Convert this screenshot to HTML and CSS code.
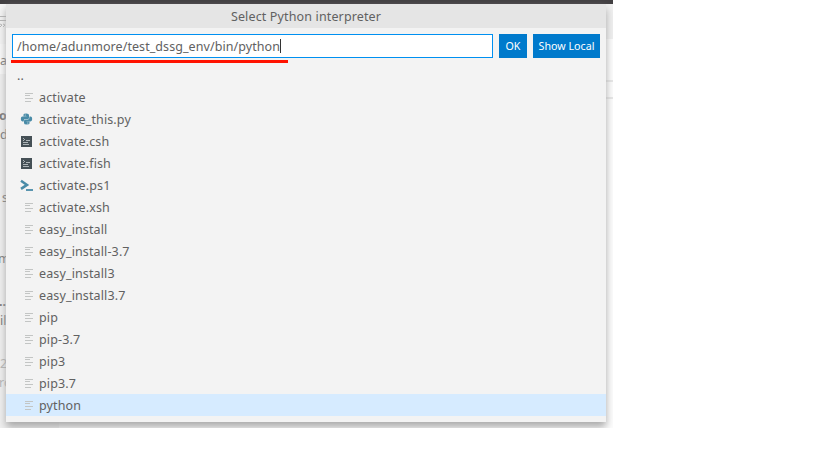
FILE: index.html
```html
<!DOCTYPE html>
<html lang="en">
<head>
<meta charset="utf-8">
<title>Select Python interpreter</title>
<link rel="stylesheet" href="styles.css">
</head>
<body>
<svg class="defs" aria-hidden="true">
  <symbol id="file" viewBox="0 0 16 16"><path d="M7 4.500h8M7 6.500h5M7 9.500h8M7 12.500h6" fill="none" stroke="#c3c5c4"/></symbol>
  <symbol id="py" viewBox="0 0 16 16"><g fill="#498ba7"><path d="M5.500 3.500Q5.500 2.500 8.300 2.500T11 4V7Q11 8 10 8H7.500Q5.600 8 5.600 10.400H4.500Q2.800 10.400 2.800 8T4.500 5.600H8.500V5.200H5.500Z"/><path d="M11.500 12.500Q11.500 13.500 8.700 13.500T6 12V10Q6 8.400 7.300 8.400H10Q11.500 8.400 11.500 5.600H12.500Q14.200 5.600 14.200 8T12.500 10.400H8.500V10.800H11.500Z"/></g><circle cx="7.200" cy="3.900" r=".5" fill="#f3f3f3"/><circle cx="9.800" cy="12.100" r=".5" fill="#f3f3f3"/></symbol>
  <symbol id="shell" viewBox="0 0 16 16"><path d="M3 3h11v11H3z" fill="#455056"/><path d="M5 5.500h1M6 6.500h1M5 7.500h1M8 7.500h4M5 9.500h5M5 11.500h6" fill="none" stroke="#b9c0c2" stroke-width=".9"/></symbol>
  <symbol id="ps" viewBox="0 0 16 16"><path d="M3 3.700l6 4.200-6 4" fill="none" stroke="#498ba7" stroke-width="2.500"/><path d="M8 13h7" stroke="#498ba7" stroke-width="1.800"/></symbol>
</svg>
<div class="window">
  <div class="titlebar"></div>
  <div class="workbench">
    <div class="side">
      <div class="tools"><svg width="6" height="12"><path d="M0 .5h6M0 4.500h6M0 8l2 1-2 2M3 8l2 1-2 2" fill="none" stroke="#b5b5b5"/></svg></div>
      <div class="tab">a</div>
      <div class="lines">
        <span class="gap30"></span>
        <b>o</b><span>d</span>
        <span class="gap44"></span><span class="inset">s</span>
        <span class="gap43"></span><span class="m">m</span>
        <span class="gap24"></span><b>...</b><span>il</span>
        <span class="gap24"></span><span class="dim">2</span><span class="dim tight">ro</span>
      </div>
    </div>
    <div class="editor">
      <div class="actions"></div><div class="crumb"></div><div class="row"></div><div class="code"></div>
    </div>
  </div>
  <div class="dialog">
    <h1><span>Select Python interpreter</span></h1>
    <div class="form">
      <div class="input"><span class="path">/home/adunmore/test_dssg_env/bin/python</span><i class="caret"></i></div>
      <div class="button ok">OK</div>
      <div class="button local">Show Local</div>
    </div>
    <div class="underline"></div>
    <ul>
      <li class="up"><span>..</span></li>
      <li><svg><use href="#file"/></svg><span>activate</span></li>
      <li><svg><use href="#py"/></svg><span>activate_this.py</span></li>
      <li><svg><use href="#shell"/></svg><span>activate.csh</span></li>
      <li><svg><use href="#shell"/></svg><span>activate.fish</span></li>
      <li><svg><use href="#ps"/></svg><span>activate.ps1</span></li>
      <li><svg><use href="#file"/></svg><span>activate.xsh</span></li>
      <li><svg><use href="#file"/></svg><span>easy_install</span></li>
      <li><svg><use href="#file"/></svg><span>easy_install-3.7</span></li>
      <li><svg><use href="#file"/></svg><span>easy_install3</span></li>
      <li><svg><use href="#file"/></svg><span>easy_install3.7</span></li>
      <li><svg><use href="#file"/></svg><span>pip</span></li>
      <li><svg><use href="#file"/></svg><span>pip-3.7</span></li>
      <li><svg><use href="#file"/></svg><span>pip3</span></li>
      <li><svg><use href="#file"/></svg><span>pip3.7</span></li>
      <li class="selected"><svg><use href="#file"/></svg><span>python</span></li>
    </ul>
  </div>
</div>
</body>
</html>
```
FILE: styles.css
```css
* { box-sizing: border-box; }
body { margin: 0; background: #fff; font: 12.5px/22px "Noto Sans", sans-serif; color: #616161; }
.defs { position: absolute; width: 0; height: 0; }
.window { position: relative; width: 613px; height: 428px; overflow: hidden; display: flex; flex-direction: column; }
.titlebar { height: 4px; background: #423f42; }
.workbench { flex: 1; display: flex; }
.side { width: 59px; background: #f0f0f0; color: #777; line-height: 19px; white-space: nowrap; }
.tools { height: 40px; background: #f5f5f5; padding-top: 12px; }
.tools svg { display: block; }
.tab { height: 30px; background: #fafafa; padding-top: 7px; }
.lines { display: flex; flex-direction: column; }
.lines b { margin-left: -1px; }
.gap30 { height: 32px; }
.gap44 { height: 44px; }
.gap43 { height: 42px; }
.gap24 { height: 24px; }
.inset { padding-left: 2px; }
.m { margin-left: -2px; }
.dim { color: #b5b5b5; }
.tight { margin-left: -1px; }
.editor { flex: 1; display: flex; flex-direction: column; background: #fdfdfd; }
.actions { height: 35px; background: #f0f0f0; }
.crumb { height: 43px; border-bottom: 2px solid #e7e7e7; }
.row { height: 17px; border-bottom: 2px solid #e7e7e7; }
.dialog { position: absolute; left: 6px; top: 4px; width: 600px; height: 418px; background: #f3f3f3; box-shadow: 0 5px 8px #a8a8a8; display: flex; flex-direction: column; }
h1 { margin: 0; height: 24px; background: #e5e5e5; font-size: 12.5px; font-weight: 400; line-height: 25px; text-align: center; letter-spacing: .14px; }
.form { display: flex; gap: 6px; padding: 6px 6px 0; }
.input { width: 481px; height: 24px; border: 1px solid #0090f1; background: #fff; padding-left: 4px; display: flex; align-items: center; }
.path { letter-spacing: .07px; line-height: 23px; padding-top: 1px; }
.caret { width: 1px; height: 14px; background: #333; }
.button { height: 24px; background: #007acc; color: #fff; font-size: 10.7px; line-height: 24px; text-align: center; white-space: nowrap; }
.ok { width: 28px; }
.local { width: 67px; }
.underline { width: 277px; height: 3px; margin: 2px 0 1px 5px; background: #ff1200; }
ul { list-style: none; margin: 0; padding: 0; }
li { height: 22px; display: flex; align-items: center; padding-left: 12px; letter-spacing: .13px; }
li span { padding-top: 2px; }
li svg { width: 16px; height: 16px; margin-right: 5px; }
.up { padding-left: 11px; }
.selected { background: #d6ebff; }
```
